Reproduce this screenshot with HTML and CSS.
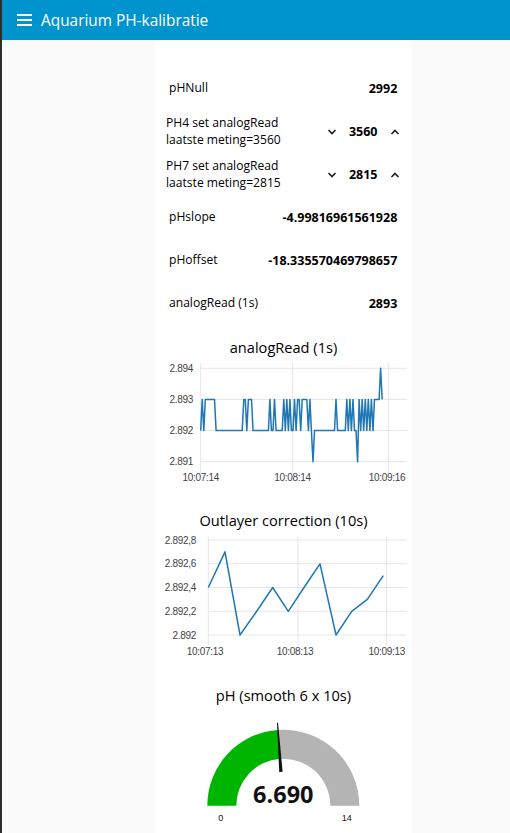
FILE: index.html
```html
<!doctype html>
<html>
<head>
    <title>Aquarium PH-kalibratie</title>
    <link rel="stylesheet" href="styles.css">
</head>
<body>
<div class="toolbar">
    <svg class="menu-icon" width="15" height="12" viewBox="0 0 15 12">
        <rect x="0" y="0" width="15" height="2"/>
        <rect x="0" y="5" width="15" height="2"/>
        <rect x="0" y="10" width="15" height="2"/>
    </svg>
    <span class="toolbar-title">Aquarium PH-kalibratie</span>
</div>
<div class="main">
    <div class="card">
        <!-- Calibration values -->
        <div class="row text-row">
            <span class="label">pHNull</span>
            <span class="value">2992</span>
        </div>
        <div class="row numeric-row">
            <span class="label">PH4 set analogRead<br>laatste meting=3560</span>
            <span class="spinner">
                <svg class="chevron" width="10" height="8" viewBox="0 0 10 8"><polyline points="1.5,2 5,5.5 8.5,2"/></svg>
                <span class="value">3560</span>
                <svg class="chevron" width="10" height="8" viewBox="0 0 10 8"><polyline points="1.5,6 5,2.5 8.5,6"/></svg>
            </span>
        </div>
        <div class="row numeric-row">
            <span class="label">PH7 set analogRead<br>laatste meting=2815</span>
            <span class="spinner">
                <svg class="chevron" width="10" height="8" viewBox="0 0 10 8"><polyline points="1.5,2 5,5.5 8.5,2"/></svg>
                <span class="value">2815</span>
                <svg class="chevron" width="10" height="8" viewBox="0 0 10 8"><polyline points="1.5,6 5,2.5 8.5,6"/></svg>
            </span>
        </div>
        <div class="row text-row">
            <span class="label">pHslope</span>
            <span class="value">-4.99816961561928</span>
        </div>
        <div class="row text-row">
            <span class="label">pHoffset</span>
            <span class="value">-18.335570469798657</span>
        </div>
        <div class="row text-row">
            <span class="label">analogRead (1s)</span>
            <span class="value">2893</span>
        </div>

        <!-- Charts -->
        <div class="chart-title">analogRead (1s)</div>
        <svg id="chartRaw" class="chart" width="257" height="153"></svg>

        <div class="chart-title">Outlayer correction (10s)</div>
        <svg id="chartCorrected" class="chart" width="257" height="155"></svg>

        <!-- Gauge -->
        <div class="chart-title">pH (smooth 6 x 10s)</div>
        <svg id="gaugePh" class="gauge" width="257" height="128"></svg>
    </div>
</div>

<script>
    const SVG_NS = 'http://www.w3.org/2000/svg';

    function add(parent, tag, attrs, text) {
        const node = document.createElementNS(SVG_NS, tag);
        for (const key in attrs) {
            node.setAttribute(key, attrs[key]);
        }
        if (text !== undefined) {
            node.textContent = text;
        }
        parent.appendChild(node);
        return node;
    }

    function drawChart(id, chart) {
        const svg = document.getElementById(id);
        const scaleY = v => chart.top + (chart.max - v) / (chart.max - chart.min) * (chart.bottom - chart.top);

        chart.yTicks.forEach(tick => {
            const y = scaleY(tick[0]);
            add(svg, 'line', {x1: chart.left, x2: chart.right, y1: y, y2: y, class: 'grid'});
            add(svg, 'text', {x: chart.labelX, y: y + 3.5, class: 'tick tick-y'}, tick[1]);
        });

        chart.xTicks.forEach(tick => {
            add(svg, 'line', {x1: tick[0], x2: tick[0], y1: chart.gridTop, y2: chart.gridBottom, class: 'grid'});
            add(svg, 'text', {x: tick[1], y: chart.labelY, class: 'tick tick-x'}, tick[2]);
        });

        const points = chart.points.map(p => p[0].toFixed(1) + ',' + scaleY(p[1]).toFixed(1)).join(' ');
        add(svg, 'polyline', {points: points, class: 'series'});
    }

    function drawGauge(id, g) {
        const svg = document.getElementById(id);
        const angle = Math.PI * (g.value - g.min) / (g.max - g.min);
        const at = (r, a) => (g.cx - r * Math.cos(a)).toFixed(2) + ',' + (g.cy - r * Math.sin(a)).toFixed(2);
        const outer = at(g.outer, angle);
        const inner = at(g.inner, angle);

        // filled part
        add(svg, 'path', {
            class: 'gauge-fill',
            d: 'M' + at(g.outer, 0) + ' A' + g.outer + ',' + g.outer + ' 0 0 1 ' + outer +
               ' L' + inner + ' A' + g.inner + ',' + g.inner + ' 0 0 0 ' + at(g.inner, 0) + ' Z'
        });
        // rest of the scale
        add(svg, 'path', {
            class: 'gauge-rest',
            d: 'M' + outer + ' A' + g.outer + ',' + g.outer + ' 0 0 1 ' + at(g.outer, Math.PI) +
               ' L' + at(g.inner, Math.PI) + ' A' + g.inner + ',' + g.inner + ' 0 0 0 ' + inner + ' Z'
        });

        // needle, wide at the base and thin at the tip
        const side = (r, w) => {
            const x = g.cx - r * Math.cos(angle) + w * Math.sin(angle);
            const y = g.cy - r * Math.sin(angle) - w * Math.cos(angle);
            return x.toFixed(2) + ',' + y.toFixed(2);
        };
        add(svg, 'polygon', {
            class: 'gauge-needle',
            points: [side(34, 1.7), side(83, 0.5), side(83, -0.5), side(34, -1.7)].join(' ')
        });

        add(svg, 'text', {x: g.cx, y: g.cy - 2.7, class: 'gauge-value'}, g.value.toFixed(3));
        add(svg, 'text', {x: 65.7, y: 115.7, class: 'gauge-limit'}, g.min);
        add(svg, 'text', {x: 191.7, y: 115.7, class: 'gauge-limit'}, g.max);
    }

    // one reading per second, last digit of 2.89x
    const rawDigits = '2323333333' + '222222222222222222' + '3323332' + '2222222222' +
        '32232222' + '23232322' + '323323333' + '23212' + '2222222222222' +
        '3222222' + '3232322' + '13232323232' + '333343';

    drawChart('chartRaw', {
        top: 11.3, bottom: 104.7, max: 2.894, min: 2.891,
        left: 45.7, right: 251.7, labelX: 38,
        gridTop: 6, gridBottom: 116, labelY: 123.5,
        yTicks: [[2.894, '2.894'], [2.893, '2.893'], [2.892, '2.892'], [2.891, '2.891']],
        xTicks: [[45.7, 45.8, '10:07:14'], [137.7, 137.5, '10:08:14'], [233.3, 232, '10:09:16']],
        points: rawDigits.split('').map((d, i) => [45.7 + i * 1.538, 2.89 + d / 1000])
    });

    drawChart('chartCorrected', {
        top: 10, bottom: 105, max: 2.8928, min: 2.892,
        left: 53.3, right: 251.7, labelX: 41,
        gridTop: 6.7, gridBottom: 115, labelY: 124.5,
        yTicks: [[2.8928, '2.892,8'], [2.8926, '2.892,6'], [2.8924, '2.892,4'], [2.8922, '2.892,2'], [2.892, '2.892']],
        xTicks: [[53.3, 50, '10:07:13'], [143, 140, '10:08:13'], [231.7, 231.7, '10:09:13']],
        points: [
            [53.3, 2.8924], [70, 2.8927], [85, 2.892], [101.7, 2.8922],
            [117.7, 2.8924], [133.3, 2.8922], [149, 2.8924], [165, 2.8926],
            [181, 2.892], [196.7, 2.8922], [212.3, 2.8923], [228.3, 2.8925]
        ]
    });

    drawGauge('gaugePh', {value: 6.69, min: 0, max: 14, cx: 128.3, cy: 100.7, outer: 76, inner: 47});
</script>
</body>
</html>
```

FILE: styles.css
```css
body {
    margin: 0;
    min-height: 100vh;
    box-sizing: border-box;
    border-left: 2px solid #2e2e2e;
    background-color: #fafafa;
    font-family: "Open Sans", Arial, sans-serif;
    color: #000;
    overflow: hidden;
}
.toolbar {
    display: flex;
    align-items: center;
    height: 40px;
    padding-left: 15px;
    background-color: #0094ce;
    color: #ffffff;
}
.menu-icon {
    fill: #ffffff;
    margin-right: 9px;
}
.toolbar-title {
    font-size: 15.4px;
}
.main {
    padding-left: 153px;
}
.card {
    width: 257px;
    min-height: calc(100vh - 40px);
    box-sizing: border-box;
    padding-top: 27px;
    background-color: #ffffff;
}
.row {
    display: flex;
    align-items: center;
    justify-content: space-between;
    height: 43px;
    font-size: 12.1px;
}
.text-row {
    padding: 0 14.7px 0 14px;
}
.numeric-row {
    padding: 0 12.5px 0 11px;
}
.label {
    line-height: 16.5px;
}
.value {
    font-weight: bold;
    font-size: 12.5px;
}
.spinner {
    display: flex;
    align-items: center;
    gap: 12px;
}
.chevron polyline {
    fill: none;
    stroke: #222;
    stroke-width: 1.7;
}
.chart-title {
    margin-top: 12px;
    line-height: 20px;
    font-size: 14.6px;
    text-align: center;
    color: #000;
}
.chart-title + .chart,
.chart-title + .gauge {
    display: block;
}
.chart + .chart-title {
    margin-top: 0;
}
.grid {
    stroke: #e6e6e6;
    stroke-width: 1;
}
.series {
    fill: none;
    stroke: #1f77b4;
    stroke-width: 1.5;
    stroke-linejoin: round;
}
.tick {
    font-family: "Liberation Sans", Arial, sans-serif;
    font-size: 10px;
    letter-spacing: -0.3px;
    fill: #444;
}
.tick-y {
    text-anchor: end;
}
.tick-x {
    text-anchor: middle;
}
.gauge-fill {
    fill: #00b500;
}
.gauge-rest {
    fill: #b4b4b4;
}
.gauge-needle {
    fill: #111;
}
.gauge-value {
    font-size: 23.5px;
    font-weight: bold;
    text-anchor: middle;
    fill: #111;
}
.gauge-limit {
    font-family: "Liberation Sans", Arial, sans-serif;
    font-size: 9px;
    text-anchor: middle;
    fill: #111;
}
```
